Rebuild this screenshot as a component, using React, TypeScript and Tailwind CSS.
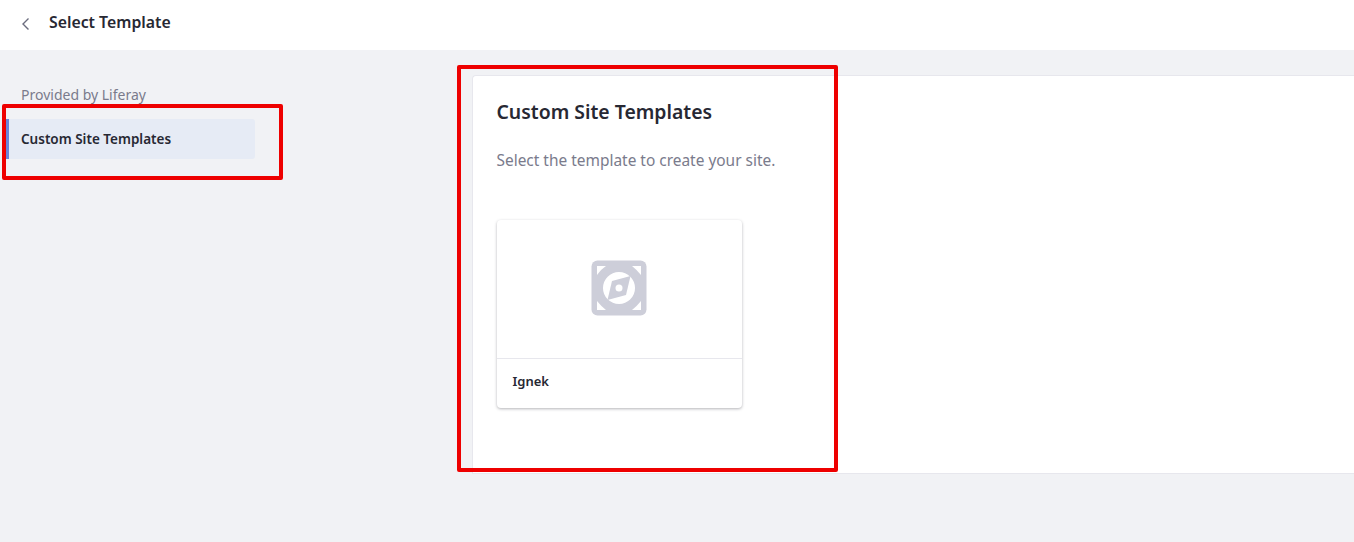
export default function App() {
  const font = { fontFamily: '"Noto Sans", sans-serif' };
  return (
    <div style={font} className="relative w-[1354px] h-[542px] overflow-hidden bg-[#f1f2f5] text-[#272833]">
      <header className="h-[50px] bg-white flex items-center pl-[20px] pb-[6px]">
        <svg width="12" height="16" viewBox="0 0 12 16" className="mt-[4px] shrink-0" fill="none">
          <path d="M8.5 2.5 L3 8 L8.5 13.5" stroke="#6b6c7e" strokeWidth="1.4" />
        </svg>
        <h1 className="ml-[17px] text-[15.8px] leading-[24px] font-semibold text-[#272833]">Select Template</h1>
      </header>

      <div className="flex pt-[25px]">
        <aside className="w-[472px] shrink-0 pl-[6px] pt-[8px]">
          <div className="pl-[15px] h-[24px] text-[14px] leading-[24px] text-[#7a7b8c]">Provided by Liferay</div>
          <div className="mt-[12px] w-[249px] h-[40px] bg-[#e6ebf5] rounded-r-[3px] border-l-[3px] border-[#6b84d8] pl-[12px] flex items-center text-[13.5px] font-semibold text-[#272833]">
            Custom Site Templates
          </div>
        </aside>

        <main className="flex-1 h-[399px] bg-white border border-[#e7e7ed] border-r-0 rounded-tl-[4px] pl-[23.5px] pt-[20px]">
          <h2 className="text-[19.4px] leading-[32px] font-semibold text-[#272833]">Custom Site Templates</h2>
          <p className="mt-[20px] text-[15.45px] leading-[24px] text-[#7a7b8c]">Select the template to create your site.</p>
          <div className="mt-[48px] w-[245.5px] h-[188px] bg-white rounded-[4px] shadow-[0_1px_3px_rgba(39,40,51,0.35)] flex flex-col">
            <div className="h-[139px] flex items-center justify-center border-b border-[#e7e7ed]">
              <svg width="56" height="56" viewBox="0 0 56 56" className="mt-[-3px] ml-[-1px]">
                <rect x="0.5" y="0.5" width="55" height="55" rx="6" fill="#cdced9" />
                <path d="M6 6 H15 Q9 10 6 15 Z M50 6 V15 Q46 10 41 6 Z M6 50 V41 Q10 46 15 50 Z M50 50 H41 Q46 46 50 41 Z" fill="#ffffff" />
                <circle cx="28" cy="28" r="16" fill="#ffffff" />
                <path d="M39.5 16 L35 35 L16.5 40 L21 21 Z" fill="#cdced9" />
                <circle cx="28" cy="28" r="3.5" fill="#ffffff" />
              </svg>
            </div>
            <div className="pl-[16px] pt-[11px] text-[13px] leading-[22px] font-semibold text-[#272833]">Ignek</div>
          </div>
        </main>
      </div>

      <div className="absolute left-[2px] top-[104px] w-[281px] h-[76px] border-[4px] border-[#ee0000] rounded-[2px]" />
      <div className="absolute left-[457px] top-[65px] w-[381px] h-[407px] border-[4px] border-[#ee0000] rounded-[2px]" />
    </div>
  );
}
